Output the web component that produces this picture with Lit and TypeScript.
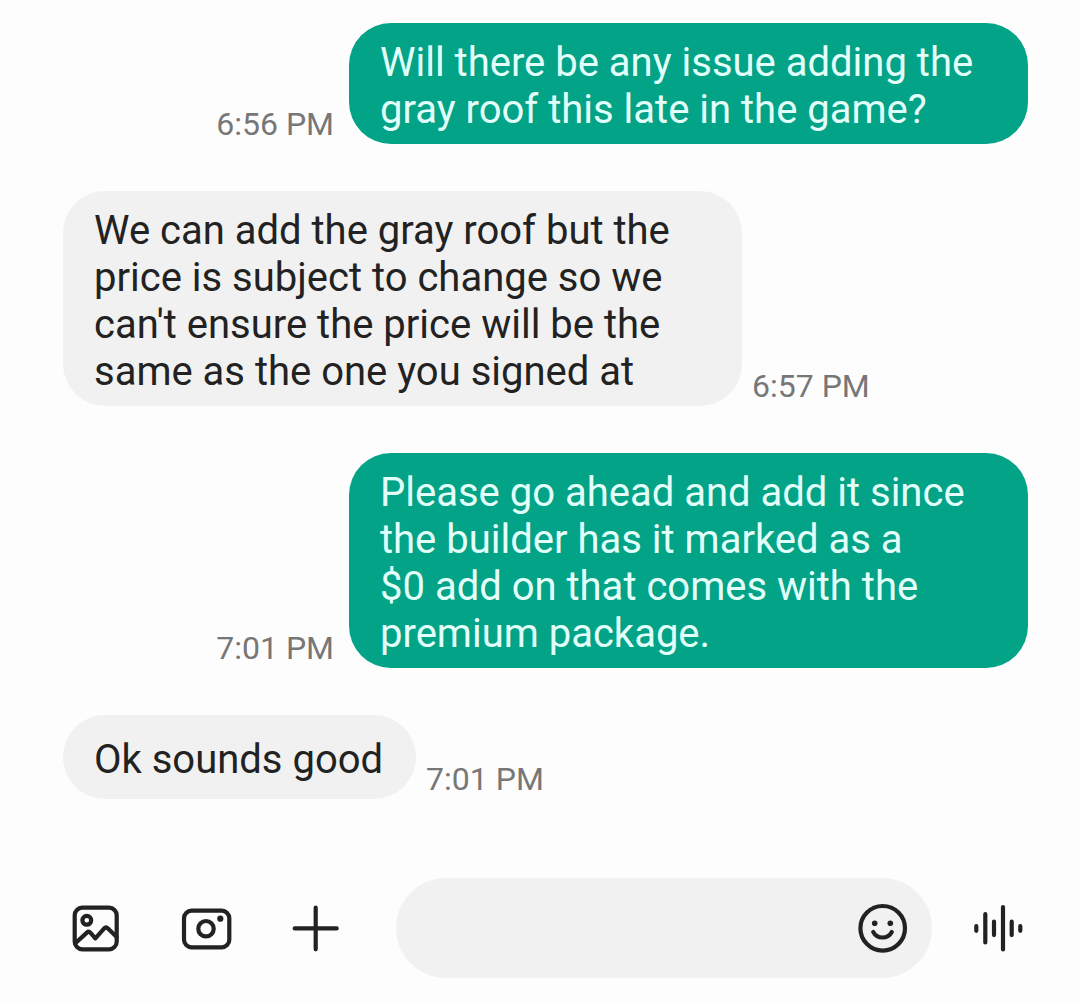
import { LitElement, html, css, svg } from "lit";
import { customElement } from "lit/decorators.js";

interface Message {
  sent: boolean;
  time: string;
  text: string;
}

const messages: Message[] = [
  { sent: true, time: "6:56 PM", text: "Will there be any issue adding the gray roof this late in the game?" },
  {
    sent: false,
    time: "6:57 PM",
    text: "We can add the gray roof but the price is subject to change so we can't ensure the price will be the same as the one you signed at",
  },
  {
    sent: true,
    time: "7:01 PM",
    text: "Please go ahead and add it since the builder has it marked as a $0\u00a0add on that comes with the premium package.",
  },
  { sent: false, time: "7:01 PM", text: "Ok sounds good" },
];

const gallery = svg`<rect x="8.7" y="9.7" width="42" height="41.6" rx="7.5"/><circle cx="20.8" cy="22.3" r="4.4"/><path d="M9.3 45.3L20.9 34.6Q22.7 33 24.4 34.7L29.3 40.3L38 30.6Q40 28.6 42 30.5L50.7 39"/>`;
const camera = svg`<rect x="8" y="12.7" width="45.3" height="36.6" rx="7.5"/><circle cx="30" cy="30.7" r="7.7"/><circle class="dot" cx="44.3" cy="20.7" r="3.1"/>`;
const plus = svg`<path d="M29.7 9.7V51.3M8.7 30.4H50.7"/>`;
const smile = svg`<circle cx="30.7" cy="30.3" r="22.3"/><circle class="dot" cx="22.7" cy="25.3" r="2.8"/><circle class="dot" cx="38.3" cy="25.3" r="2.8"/><path d="M21.2 34A10.6 10.6 0 0 0 39.8 34"/>`;
const voice = svg`<path d="M8.3 28.2V32.8M17.3 16.2V44.5M26 23.5V37.1M35 9.2V51.5M43.7 23.5V37.1M52.3 28.2V32.8"/>`;

@customElement("app-root")
export class AppRoot extends LitElement {
  static styles = css`
    :host {
      display: block;
      font-family: Roboto, sans-serif;
      background: #fdfdfd;
      color: #222222;
    }
    .screen {
      box-sizing: border-box;
      min-height: 100vh;
      display: flex;
      flex-direction: column;
      justify-content: space-between;
      gap: 40px;
      padding: 23px 52px 24px 63px;
    }
    .thread {
      display: flex;
      flex-direction: column;
      gap: 47px;
    }
    .row {
      display: flex;
      align-items: flex-end;
      gap: 10px;
    }
    .row.sent {
      flex-direction: row-reverse;
      gap: 15px;
    }
    .bubble {
      box-sizing: border-box;
      display: flex;
      align-items: center;
      min-height: 84px;
      max-width: 679px;
      padding: 16px 33px 11px 31px;
      border-radius: 42px;
      background: #f1f1f1;
      font-size: 40px;
      line-height: 47px;
    }
    .text {
      margin: 0;
    }
    .sent .bubble {
      background: #02a387;
      color: #e2fff9;
    }
    .time {
      flex: none;
      font-size: 32px;
      line-height: 40px;
      color: #777777;
    }
    .composer {
      display: flex;
      align-items: center;
      gap: 50px;
      padding-left: 3px;
    }
    .entry {
      flex: 1;
      min-width: 0;
      display: flex;
      align-items: center;
      gap: 36px;
    }
    .field {
      box-sizing: border-box;
      flex: 1;
      min-width: 0;
      height: 100px;
      display: flex;
      align-items: center;
      padding: 0 20px 0 40px;
      border-radius: 50px;
      background: #f1f1f1;
    }
    .input {
      flex: 1;
      min-width: 0;
      padding: 0;
      border: 0;
      outline: 0;
      background: none;
      font: inherit;
      font-size: 40px;
      line-height: 47px;
      color: inherit;
    }
    .icon-button {
      flex: none;
      padding: 0;
      border: 0;
      background: none;
      color: inherit;
      cursor: pointer;
    }
    .icon {
      display: block;
      width: 60px;
      height: 60px;
      fill: none;
      stroke: currentColor;
      stroke-width: 4.2;
      stroke-linecap: round;
      stroke-linejoin: round;
    }
    .dot {
      fill: currentColor;
      stroke: none;
    }
  `;

  private iconButton(label: string, shape: unknown) {
    return html`<button class="icon-button" type="button" aria-label=${label}>
      <svg class="icon" viewBox="0 0 60 60" aria-hidden="true">${shape}</svg>
    </button>`;
  }

  private row(m: Message) {
    return html`<div class="row ${m.sent ? "sent" : ""}">
      <div class="bubble"><p class="text">${m.text}</p></div>
      <time class="time">${m.time}</time>
    </div>`;
  }

  render() {
    return html`<main class="screen">
      <section class="thread">${messages.map((m) => this.row(m))}</section>
      <form class="composer" @submit=${(e: Event) => e.preventDefault()}>
        ${this.iconButton("Gallery", gallery)} ${this.iconButton("Camera", camera)}
        ${this.iconButton("More", plus)}
        <div class="entry">
          <div class="field">
            <input class="input" type="text" aria-label="Message" />
            ${this.iconButton("Emoji", smile)}
          </div>
          ${this.iconButton("Voice message", voice)}
        </div>
      </form>
    </main>`;
  }
}
